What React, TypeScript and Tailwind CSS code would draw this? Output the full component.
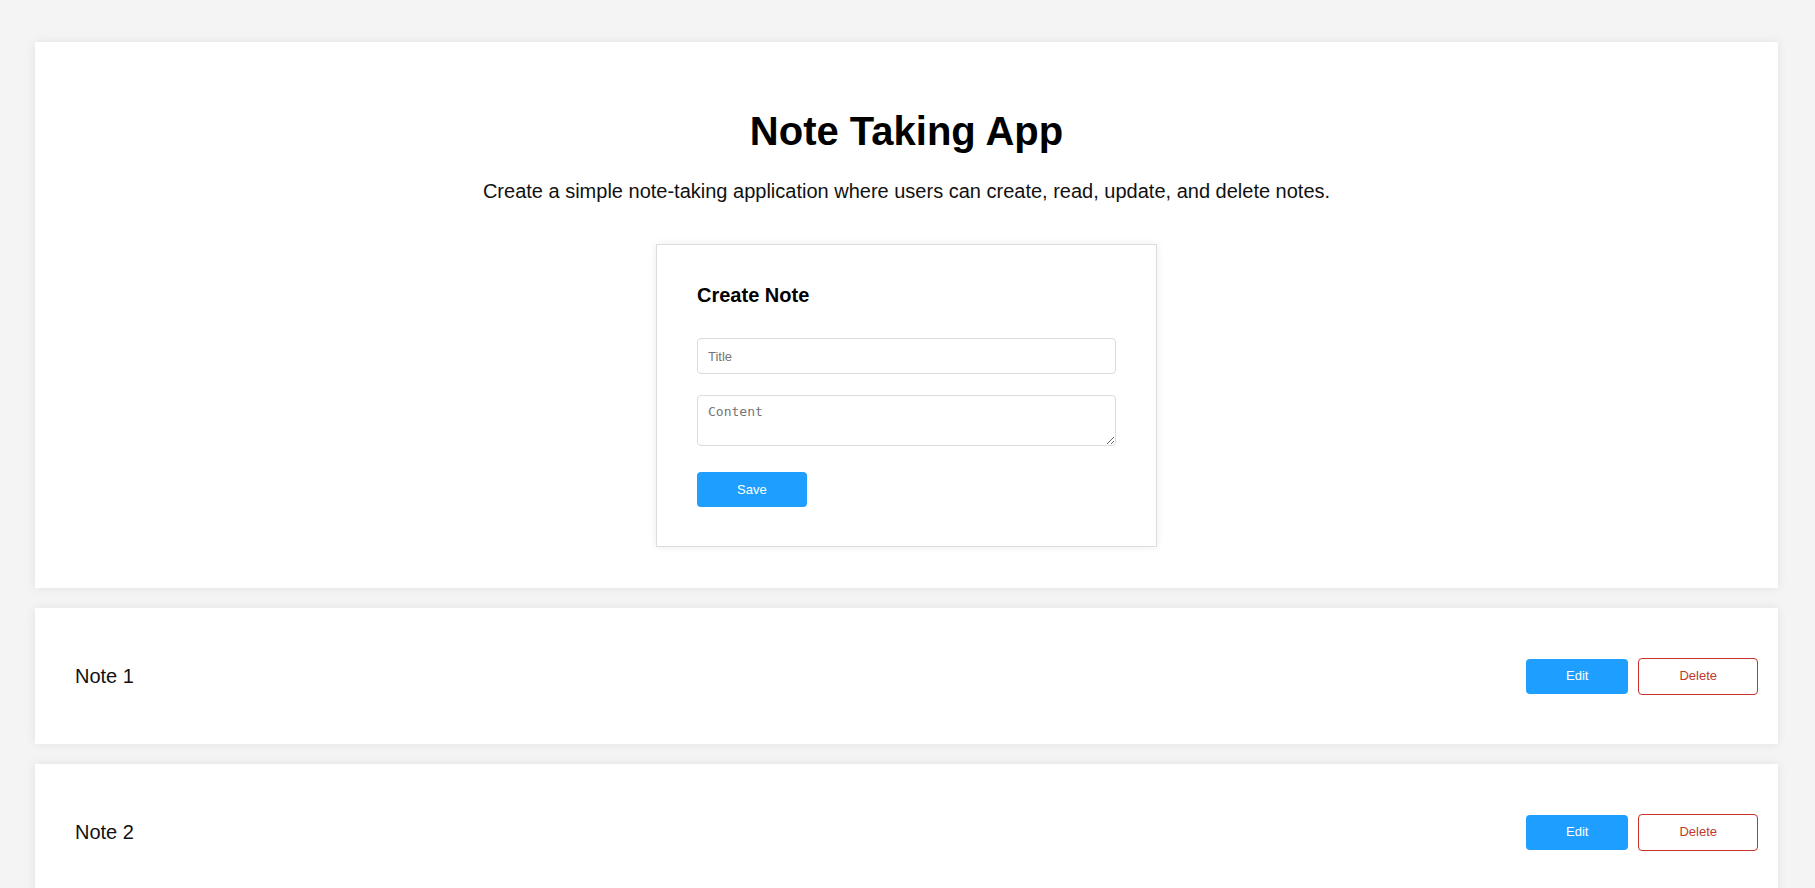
import * as React from "react"

const notes = [
  { id: 1, title: "Note 1" },
  { id: 2, title: "Note 2" },
]

export default function App() {
  return (
    <div className="min-h-screen bg-[#f4f4f4] pl-[35px] pr-[37px] pt-[42px] font-['Liberation_Sans',Arial,sans-serif] text-[#111]">
      <div className="flex flex-col gap-[20px]">
        {/* Header + form */}
        <div className="bg-white shadow-[0_0_10px_rgba(0,0,0,0.08)] pt-[67px] pb-[41px] flex flex-col items-center">
          <h1 className="text-[40px] leading-[45px] font-bold text-black">Note Taking App</h1>
          <p className="mt-[26px] text-[20px] leading-[23px] text-[#111]">
            Create a simple note-taking application where users can create, read, update, and delete notes.
          </p>

          <div className="mt-[41px] w-[501px] border border-[#dddddd] bg-white shadow-[0_0_8px_rgba(0,0,0,0.08)] px-[40px] pt-[39px] pb-[39px]">
            <h2 className="text-[20px] leading-[23px] font-bold text-black">Create Note</h2>
            <input
              type="text"
              placeholder="Title"
              className="mt-[31px] block w-full h-[36px] border border-[#dcdcdc] rounded-[4px] px-[10px] text-[13px] placeholder:text-[#757575] outline-none"
            />
            <textarea
              placeholder="Content"
              className="mt-[21px] block w-full h-[51px] border border-[#dcdcdc] rounded-[4px] px-[10px] py-[8px] text-[13px] leading-[15px] font-['DejaVu_Sans_Mono',monospace] placeholder:text-[#757575] outline-none"
            />
            <button className="mt-[26px] block h-[35px] px-[40px] rounded-[4px] bg-[#1e9fff] text-white text-[13px] font-medium">
              Save
            </button>
          </div>
        </div>

        {/* Notes */}
        {notes.map((note) => (
          <div
            key={note.id}
            className="h-[136px] bg-white shadow-[0_0_10px_rgba(0,0,0,0.08)] pl-[40px] pr-[20px] flex items-center justify-between"
          >
            <span className="text-[20px] leading-[23px] text-[#111]">{note.title}</span>
            <div className="flex items-center gap-[10px]">
              <button className="h-[35px] px-[40px] rounded-[4px] bg-[#1e9fff] text-white text-[13px]">
                Edit
              </button>
              <button className="h-[37px] px-[40px] rounded-[4px] border border-[#c9302c] bg-white text-[#c0392b] text-[13px]">
                Delete
              </button>
            </div>
          </div>
        ))}
      </div>
    </div>
  )
}
